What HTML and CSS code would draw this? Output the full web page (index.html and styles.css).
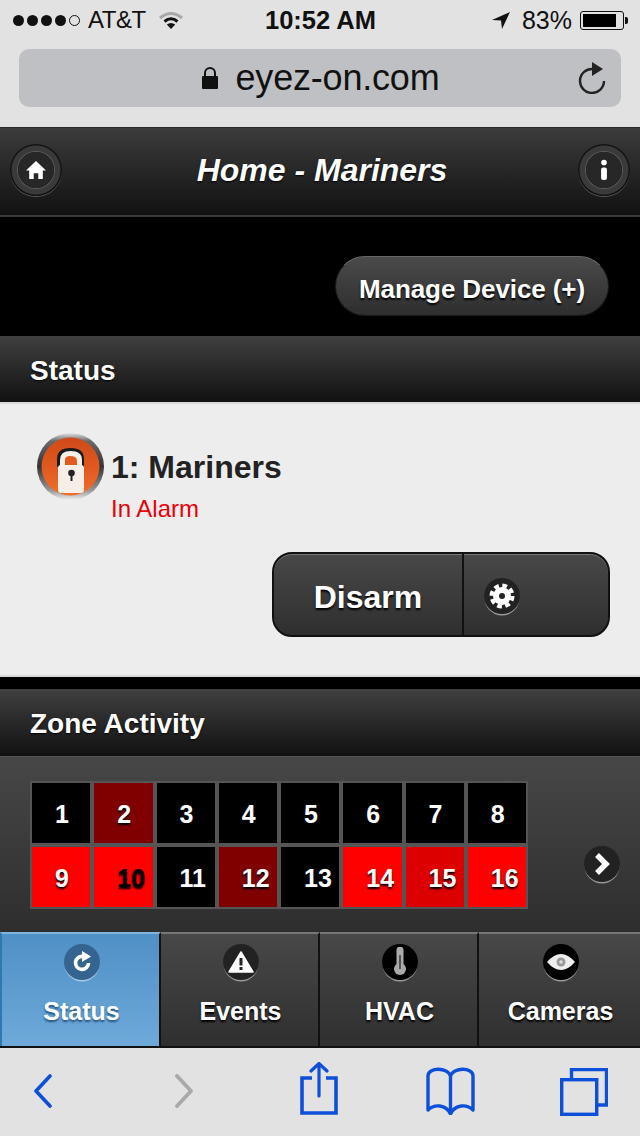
FILE: index.html
```html
<!DOCTYPE html>
<html>
<head>
<meta name="viewport" content="width=device-width,initial-scale=1"/>
<title>Home - Mariners</title>
<link rel="stylesheet" href="styles.css">
</head>
<body>
<div class="browserTop">
    <div class="statusBar">
        <div class="carrier">
            <span class="signal"><i></i><i></i><i></i><i></i><i class="off"></i></span>
            <span class="carrierName">AT&amp;T</span>
            <svg class="wifi" width="26" height="19" viewBox="0 0 26 19"><path d="M2 7 Q13 -2 24 7" fill="none" stroke="#a8a8a8" stroke-width="3"/><path d="M6.5 10.5 Q13 5 19.5 10.5" fill="none" stroke="#111" stroke-width="3"/><path d="M13 18 L8.8 13.4 Q13 10.4 17.2 13.4 Z" fill="#111"/></svg>
        </div>
        <div class="clock">10:52 AM</div>
        <div class="power">
            <svg width="18" height="17" viewBox="0 0 18 17"><path d="M18 0 L0 8 L9 8.5 L10 17 Z" fill="#111"/></svg>
            <span class="percent">83%</span>
            <span class="battery"><span class="batteryFill"></span></span>
            <span class="batteryNub"></span>
        </div>
    </div>
    <div class="urlBar">
        <svg class="urlLock" width="18" height="24" viewBox="0 0 18 24"><path d="M4 11 V7 a5 5 0 0 1 10 0 V11" fill="none" stroke="#111" stroke-width="2"/><rect x="1" y="10" width="16" height="13" rx="1" fill="#111"/></svg>
        <span class="urlText">eyez-on.com</span>
        <svg class="reload" width="30" height="32" viewBox="0 0 30 32"><path d="M16 7 A12 12 0 1 0 27 19" fill="none" stroke="#222" stroke-width="2.4"/><path d="M15 0 L26 7 L15 14 Z" fill="#222"/></svg>
    </div>
</div>

<div class="appHeader">
    <span class="ringBtn">
        <svg width="22" height="20" viewBox="0 0 24 22"><path d="M12 1 L23 11.5 H19.5 V21 H14.5 V14.5 H9.5 V21 H4.5 V11.5 H1 Z" fill="#fff"/></svg>
    </span>
    <h1 class="appTitle">Home - Mariners</h1>
    <span class="ringBtn">
        <svg width="10" height="24" viewBox="0 0 12 26"><circle cx="6" cy="4" r="3.4" fill="#fff"/><rect x="2.5" y="10" width="7" height="15" rx="2.5" fill="#fff"/></svg>
    </span>
</div>

<div class="manageRow">
    <a class="manageBtn">Manage Device (+)</a>
</div>

<h2 class="sectionBar statusBarTitle">Status</h2>

<div class="statusPanel">
    <div class="deviceRow">
        <svg class="alarmIcon" width="67" height="67" viewBox="0 0 67 67">
            <defs>
                <linearGradient id="metal" x1="0" y1="0" x2="0" y2="1">
                    <stop offset="0" stop-color="#e4e4e4"/>
                    <stop offset="0.12" stop-color="#6a6a6a"/>
                    <stop offset="0.5" stop-color="#333"/>
                    <stop offset="0.86" stop-color="#999"/>
                    <stop offset="1" stop-color="#eee"/>
                </linearGradient>
                <linearGradient id="orange" x1="0" y1="0" x2="0" y2="1">
                    <stop offset="0" stop-color="#cf4a1a"/>
                    <stop offset="0.55" stop-color="#e25a20"/>
                    <stop offset="1" stop-color="#f0702e"/>
                </linearGradient>
            </defs>
            <circle cx="33.5" cy="33.5" r="33.5" fill="url(#metal)"/>
            <circle cx="33.5" cy="33.5" r="29" fill="url(#orange)"/>
            <path d="M20 42 V26 Q20 15 33.500 15 Q47 15 47 26 V34 H20 Z" fill="#1a1a1a"/>
            <path d="M23 42 V27 Q23 18 33.500 18 Q45 18 45 27 V34 H23 Z" fill="#f5efe8"/>
            <path d="M28 32 V27 Q28 23 33 23 Q40 23 40 28 V32 Z" fill="#e25a20"/>
            <rect x="21" y="32" width="26" height="28" rx="3" fill="#f5efe8"/>
            <circle cx="34.500" cy="40" r="3.300" fill="#222"/>
            <rect x="33.500" y="40" width="2" height="8" fill="#222"/>
        </svg>
        <div class="deviceText">
            <div class="deviceName">1: Mariners</div>
            <div class="deviceState">In Alarm</div>
        </div>
    </div>
    <div class="splitRow">
        <div class="splitBtn">
            <span class="splitMain">Disarm</span>
            <span class="splitSide">
                <span class="roundIcon">
                    <svg width="26" height="26" viewBox="0 0 26 26"><circle cx="13" cy="13" r="9" fill="#fff"/><circle cx="13" cy="13" r="10.500" fill="none" stroke="#fff" stroke-width="4" stroke-dasharray="4.750 3.500"/><circle cx="13" cy="13" r="3" fill="#222"/></svg>
                </span>
            </span>
        </div>
    </div>
</div>

<h2 class="sectionBar zoneTitle">Zone Activity</h2>

<div class="zonePanel">
    <div class="zoneGrid">
        <div class="zone">1</div>
        <div class="zone dark">2</div>
        <div class="zone">3</div>
        <div class="zone">4</div>
        <div class="zone">5</div>
        <div class="zone">6</div>
        <div class="zone">7</div>
        <div class="zone">8</div>
        <div class="zone red">9</div>
        <div class="zone red blackText">10</div>
        <div class="zone">11</div>
        <div class="zone dark">12</div>
        <div class="zone">13</div>
        <div class="zone red">14</div>
        <div class="zone mid">15</div>
        <div class="zone red">16</div>
    </div>
    <span class="roundIcon nextIcon">
        <svg width="18" height="24" viewBox="0 0 18 24"><path d="M4 3 L13 12 L4 21" fill="none" stroke="#fff" stroke-width="5.500"/></svg>
    </span>
</div>

<div class="tabBar">
    <div class="tab active">
        <span class="roundIcon">
            <svg width="24" height="24" viewBox="0 0 24 24"><path d="M13 6.500 A6.500 6.500 0 1 0 18.500 13" fill="none" stroke="#fff" stroke-width="3.600"/><path d="M12 1 L21 6.500 L12 12 Z" fill="#fff"/></svg>
        </span>
        <span class="tabLabel">Status</span>
    </div>
    <div class="tab">
        <span class="roundIcon">
            <svg width="26" height="24" viewBox="0 0 26 24"><path d="M13 2 L25 22 H1 Z" fill="#fff" stroke="#fff" stroke-width="1.500" stroke-linejoin="round"/><rect x="11.500" y="8" width="3" height="7.500" fill="#222"/><rect x="11.500" y="17" width="3" height="3" fill="#222"/></svg>
        </span>
        <span class="tabLabel">Events</span>
    </div>
    <div class="tab">
        <span class="roundIcon blackIcon">
            <svg width="16" height="30" viewBox="0 0 16 30"><path d="M8 3 V19" stroke="#aaa" stroke-width="7" stroke-linecap="round"/><circle cx="8" cy="22" r="6" fill="#aaa"/><path d="M8 8 V22" stroke="#555" stroke-width="2"/></svg>
        </span>
        <span class="tabLabel">HVAC</span>
    </div>
    <div class="tab">
        <span class="roundIcon blackIcon">
            <svg width="30" height="20" viewBox="0 0 30 20"><path d="M1 10 Q15 -6 29 10 Q15 26 1 10 Z" fill="#eee"/><circle cx="15" cy="10" r="4.500" fill="#999"/><circle cx="15" cy="10" r="1.800" fill="#ddd"/></svg>
        </span>
        <span class="tabLabel">Cameras</span>
    </div>
</div>

<div class="toolBar">
    <svg class="tool back" width="18" height="34" viewBox="0 0 18 34"><path d="M16 2 L2 17 L16 32" fill="none" stroke="#0d4fd8" stroke-width="3.600" stroke-linecap="round" stroke-linejoin="round"/></svg>
    <svg class="tool forward" width="18" height="34" viewBox="0 0 18 34"><path d="M2 2 L16 17 L2 32" fill="none" stroke="#a9a9a9" stroke-width="3.800" stroke-linecap="round" stroke-linejoin="round"/></svg>
    <svg class="tool share" width="38" height="53" viewBox="0 0 38 53"><path d="M12 16 H2 V51 H36 V16 H26" fill="none" stroke="#0d4fd8" stroke-width="3.600"/><path d="M19 2 V34 M11 9 L19 1.500 L27 9" fill="none" stroke="#0d4fd8" stroke-width="3.200" stroke-linecap="round"/></svg>
    <svg class="tool book" width="49" height="48" viewBox="0 0 49 48"><path d="M24.500 8 C22 -1 2 -1 2 8 V42 C8 36 20 36 24.500 46 C29 36 41 36 47 42 V8 C47 -1 27 -1 24.500 8 Z M24.500 8 V46" transform="translate(0 1)" fill="none" stroke="#0d4fd8" stroke-width="3.400" stroke-linejoin="round"/></svg>
    <svg class="tool tabs" width="48" height="48" viewBox="0 0 48 48"><path d="M11.500 11 V1.500 H46.500 V37 H38" fill="none" stroke="#0d4fd8" stroke-width="3.400"/><rect x="1.700" y="11.700" width="35" height="34.600" fill="none" stroke="#0d4fd8" stroke-width="3.400"/></svg>
</div>
</body>
</html>
```

FILE: styles.css
```css
html,body{
    margin:0;
    padding:0;
}
body{
    width:640px;
    height:1136px;
    overflow:hidden;
    background:#000;
    font-family:"Liberation Sans",Arial,sans-serif;
}
h1,h2{
    margin:0;
}

/* browser chrome */
.browserTop{
    height:127px;
    background:#e2e2e2;
    border-bottom:1px solid #2a2a2a;
}
.statusBar{
    height:40px;
    padding:0 12px 0 13px;
    display:grid;
    grid-template-columns:1fr auto 1fr;
    align-items:center;
    color:#111;
}
.carrier,.power{
    display:flex;
    align-items:center;
}
.power{
    justify-content:flex-end;
}
.signal{
    display:flex;
    gap:3px;
    margin-right:8px;
}
.signal i{
    width:11px;
    height:11px;
    border-radius:50%;
    background:#111;
    box-sizing:border-box;
}
.signal i.off{
    background:none;
    border:1px solid #111;
}
.carrierName{
    font-size:24px;
    letter-spacing:-0.5px;
}
.wifi{
    margin-left:12px;
}
.clock{
    font-size:25.500px;
    font-weight:700;
}
.percent{
    font-size:25px;
    margin:0 8px 0 12px;
}
.battery{
    width:44px;
    height:19px;
    box-sizing:border-box;
    border:1.500px solid #111;
    border-radius:3px;
    padding:2px;
    display:flex;
}
.batteryFill{
    width:33px;
    background:#000;
}
.batteryNub{
    width:3px;
    height:7px;
    background:#111;
    border-radius:0 2px 2px 0;
    margin-left:1px;
}
.urlBar{
    position:relative;
    height:58px;
    margin:9px 19px 0 19px;
    border-radius:10px;
    background:#bfc0c4;
    display:flex;
    align-items:center;
    justify-content:center;
    gap:17px;
}
.urlText{
    font-size:36px;
    letter-spacing:-0.2px;
    color:#111;
}
.reload{
    position:absolute;
    right:14px;
    top:13px;
}

/* app */
.appHeader{
    height:87px;
    padding:0 10px;
    display:flex;
    align-items:center;
    justify-content:space-between;
    background:linear-gradient(#3c3c3c,#111);
    border-bottom:2px solid #3a3a3a;
}
.appTitle{
    font-size:32px;
    font-style:italic;
    font-weight:700;
    color:#fff;
    margin:0 0 2px 4px;
    text-shadow:0 1px 2px #000;
}
.ringBtn{
    width:52px;
    height:52px;
    margin-bottom:3px;
    border-radius:50%;
    background:radial-gradient(circle,#272727 0,#272727 18px,#5a5a5a 18.500px,#3a3a3a 19.500px,#3a3a3a 24px,#111 25px,#111 26px);
    box-shadow:0 1px 0 #5a5a5a;
    display:flex;
    align-items:center;
    justify-content:center;
}
.manageRow{
    height:119px;
    padding-right:31px;
    background:#000;
    display:flex;
    align-items:center;
    justify-content:flex-end;
}
.manageBtn{
    width:274px;
    height:60px;
    margin-top:18px;
    padding-top:8px;
    box-sizing:border-box;
    border:1px solid #1c1c1c;
    border-top-color:#666;
    border-radius:30px;
    background:linear-gradient(#4a4a4a,#2e2e2e);
    color:#fff;
    font-size:26px;
    font-weight:700;
    letter-spacing:-0.1px;
    display:flex;
    align-items:center;
    justify-content:center;
    text-shadow:0 2px 2px #000;
}
.sectionBar{
    height:66px;
    padding-left:30px;
    line-height:70px;
    font-size:28px;
    font-weight:700;
    color:#fff;
    background:linear-gradient(#404040,#111);
    text-shadow:0 1px 2px #000;
}
.zoneTitle{
    height:67px;
    border-bottom:1px solid #555;
}
.statusPanel{
    box-sizing:border-box;
    background:#ededed;
    border-top:2px solid #d8d8d8;
    border-bottom:2px solid #d8d8d8;
    margin-bottom:12px;
    height:275px;
}
.deviceRow{
    display:flex;
    padding:29px 0 0 37px;
}
.alarmIcon{
    flex:none;
}
.deviceText{
    margin-left:7px;
}
.deviceName{
    font-size:32px;
    font-weight:700;
    color:#222;
    margin-top:16px;
}
.deviceState{
    font-size:24px;
    color:#e8000b;
    margin-top:9px;
}
.splitRow{
    display:flex;
    justify-content:flex-end;
    padding:29px 30px 0 0;
}
.splitBtn{
    width:338px;
    height:85px;
    box-sizing:border-box;
    border:2px solid #111;
    border-radius:20px;
    background:linear-gradient(#484848,#2f2f2f);
    box-shadow:inset 0 1px 0 #777;
    display:flex;
    color:#fff;
}
.splitMain{
    width:190px;
    padding-top:5px;
    box-sizing:border-box;
    font-size:32px;
    font-weight:700;
    display:flex;
    align-items:center;
    justify-content:center;
    text-shadow:0 2px 2px #000;
    border-right:2px solid #111;
}
.splitSide{
    padding:3px 0 0 20px;
    display:flex;
    align-items:center;
}
.roundIcon{
    width:36px;
    height:36px;
    border-radius:50%;
    background:#222;
    box-shadow:0 2px 0 -0.500px #999;
    display:flex;
    align-items:center;
    justify-content:center;
    flex:none;
}
.blackIcon{
    background:#000;
}

/* zones */
.zonePanel{
    height:175px;
    padding:24px 0 0 30px;
    box-sizing:border-box;
    background:linear-gradient(#474747,#2e2e2e);
    display:flex;
    align-items:flex-start;
}
.zoneGrid{
    width:498px;
    box-sizing:border-box;
    padding:2px;
    background:#555;
    display:grid;
    grid-template-columns:repeat(8,1fr);
    gap:4px;
}
.zone{
    height:60px;
    padding-left:23px;
    background:#000;
    color:#fff;
    font-size:25px;
    font-weight:700;
    line-height:63px;
    text-shadow:0 2px 2px #000;
}
.zone.dark{
    background:#800000;
}
.zone.red{
    background:#f00;
}
.zone.mid{
    background:#dc0000;
}
.zone.blackText{
    color:#000;
}
.nextIcon{
    margin:65px 0 0 56px;
}

/* tabs */
.tabBar{
    height:114px;
    display:grid;
    grid-template-columns:161px 159px 159px 161px;
    border-bottom:2px solid #111;
}
.tab{
    box-sizing:border-box;
    padding:10px 0 0 2px;
    background:linear-gradient(#484848,#2f2f2f);
    border-top:2px solid #777;
    border-right:2px solid #111;
    display:flex;
    flex-direction:column;
    align-items:center;
    color:#fff;
}
.tab:last-child{
    border-right:none;
}
.tab.active{
    background:linear-gradient(#4f90c6,#6ea9d9);
    border-top-color:#7fb6e0;
    border-left:2px solid #2d7ab0;
}
.tab.active .roundIcon{
    background:#34648f;
    box-shadow:0 2px 0 -0.500px #a8cbe8;
}
.tabLabel{
    font-size:25px;
    font-weight:700;
    margin-top:17px;
    text-shadow:0 2px 2px #000;
}
.tab.active .tabLabel{
    text-shadow:0 2px 2px #27557f;
}

/* bottom toolbar */
.toolBar{
    height:88px;
    background:#e2e2e2;
    display:flex;
    align-items:flex-start;
}
.tool{
    display:block;
    flex:none;
}
.back{
    margin:26px 0 0 34px;
}
.forward{
    margin:26px 0 0 123px;
}
.share{
    margin:14px 0 0 107px;
}
.book{
    margin:19px 0 0 88px;
}
.tabs{
    margin:20px 0 0 85px;
}
```
